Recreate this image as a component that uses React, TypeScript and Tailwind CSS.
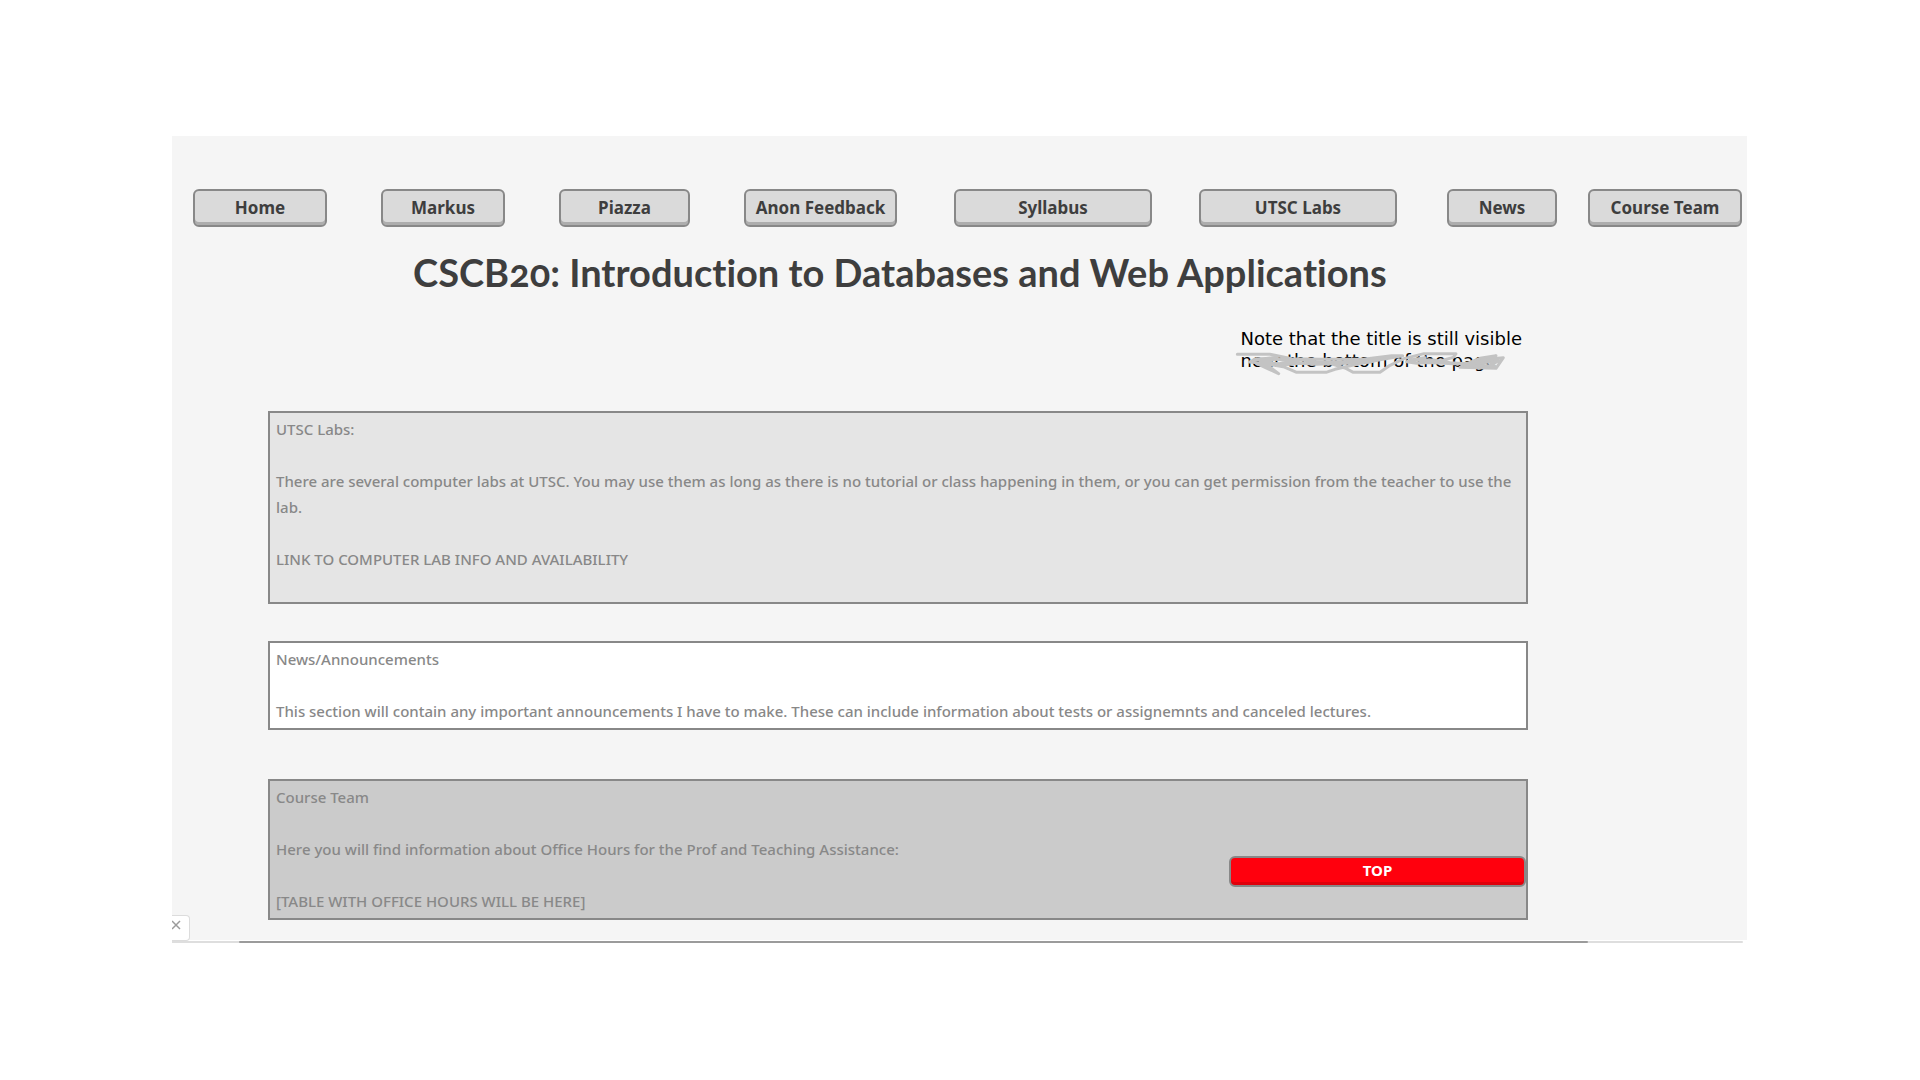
import React from "react";

const navItems = [
  { label: "Home", space: "mr-[54px]" },
  { label: "Markus", space: "mr-[54px]" },
  { label: "Piazza", space: "mr-[54px]" },
  { label: "Anon Feedback", space: "mr-[57px]" },
  { label: "Syllabus", space: "mr-[47px]" },
  { label: "UTSC Labs", space: "mr-[50px]" },
  { label: "News", space: "mr-[31px]" },
  { label: "Course Team", space: "mr-0" },
];

function NavBar() {
  return (
    <nav
      aria-label="Course"
      className="grid grid-cols-[188fr_178fr_185fr_210fr_245fr_248fr_141fr_154fr] pr-[5px] pl-[21px]"
    >
      {navItems.map(({ label, space }) => (
        <button
          key={label}
          type="button"
          className={`h-[38px] rounded-md border-2 border-[#888] bg-[#dadada] text-[17px] font-bold whitespace-nowrap text-[#3e3e3e] shadow-[inset_0_-3px_0_#adadad] ${space}`}
        >
          {label}
        </button>
      ))}
    </nav>
  );
}

function Scribble() {
  return (
    <svg
      aria-hidden="true"
      viewBox="0 0 1020 240"
      className="pointer-events-none absolute -top-[18px] -left-5 h-[80px] w-[340px]"
      fill="none"
      stroke="#c3c3c3"
      strokeWidth="9"
      strokeLinecap="round"
      strokeLinejoin="round"
    >
      <path d="M52 133 L150 133 L215 146 L300 148 L430 148 L515 137 L548 137 L480 149 L400 165 L345 178 L318 187 L230 187 L190 170 L130 160 L88 156 L110 146 L160 148 L215 151 L180 161 L125 158 L150 172 L176 191 L135 172 L110 160" />
      <path d="M195 158 L245 150 L295 156 L360 156 L420 152 L485 144 L450 156 L380 160 L290 163 L240 160 L180 166" />
      <path d="M330 160 L375 174 L400 187 L480 187 L510 166 L552 146 L612 131 L708 131 L700 142 L650 156 L590 160 L560 155 L615 143 L570 150 L640 150 L690 158 L740 161 L780 145 L828 137 L770 152 L720 172 L828 175 L850 143 L800 148 L760 164 L810 168 L835 152 L790 158 L700 161 L610 157" />
      <path d="M100 150 L170 142 L150 154 L120 152" />
      <path d="M735 170 L775 155 L820 145 L812 163 L825 170 L745 166" />
    </svg>
  );
}

function Card({ tone, children }: { tone: string; children: React.ReactNode }) {
  return (
    <section
      className={`relative border-2 border-[#888] px-1.5 pt-[3px] pb-1 text-[15px] leading-[26px] font-medium text-[#888] ${tone}`}
    >
      {children}
    </section>
  );
}

export default function App() {
  return (
    <div className="min-h-screen bg-white pt-[136px] pr-[173px] pl-[172px] font-['Noto_Sans',sans-serif]">
      <main className="relative bg-[#f5f5f5] pt-[53px] pb-5">
        <NavBar />

        <h1 className="mt-5 pl-[241px] font-['Lato',sans-serif] text-[38px] leading-[50px] font-bold text-[#3e3e3e] oldstyle-nums [font-variant-ligatures:none]">
          CSCB20: Introduction to Databases and Web Applications
        </h1>

        <div className="mt-[31px] flex justify-end pr-[225px]">
          <p className="relative font-['DejaVu_Sans',sans-serif] text-[18px] leading-[22px] text-black">
            Note that the title is still visible
            <br />
            near the bottom of the page
            <Scribble />
          </p>
        </div>

        <div className="mt-[39px] mr-[219px] ml-[96px]">
          <Card tone="bg-[#e5e5e5]">
            <h2>UTSC Labs:</h2>
            <p className="mt-[26px]">
              There are several computer labs at UTSC. You may use them as long as there is no tutorial or
              class happening in them, or you can get permission from the teacher to use the lab.
            </p>
            <p className="my-[26px]">LINK TO COMPUTER LAB INFO AND AVAILABILITY</p>
          </Card>

          <div className="mt-[37px]">
            <Card tone="bg-white">
              <h2>News/Announcements</h2>
              <p className="mt-[26px]">
                This section will contain any important announcements I have to make. These can include
                information about tests or assignemnts and canceled lectures.
              </p>
            </Card>
          </div>

          <div className="mt-[49px]">
            <Card tone="bg-[#cbcbcb]">
              <h2>Course Team</h2>
              <p className="mt-[26px]">
                Here you will find information about Office Hours for the Prof and Teaching Assistance:
              </p>
              <p className="mt-[26px]">[TABLE WITH OFFICE HOURS WILL BE HERE]</p>
              <button
                type="button"
                className="absolute right-0 bottom-[31px] flex h-[31px] w-[297px] items-center justify-center rounded-md border-2 border-[#888] bg-[#ff000d] pb-1 font-bold text-white shadow-[inset_0_-3px_0_#e0000b]"
              >
                TOP
              </button>
            </Card>
          </div>
        </div>

        <button
          type="button"
          aria-label="Close"
          className="absolute bottom-[-1px] left-0 h-[26px] w-[18px] rounded-r border border-l-0 border-[#dcdcdc] bg-white"
        >
          <svg viewBox="0 0 16 24" className="h-6 w-4" fill="none" stroke="#9b9b9b" strokeWidth="1.5">
            <path d="M0 5 L8 13 M8 5 L0 13" />
          </svg>
        </button>
      </main>

      <div className="mt-px mr-1 h-0.5 rounded-r-full bg-[#dedede] pr-[155px] pl-[67px]">
        <div className="h-full rounded-full bg-[#9b9b9b]" />
      </div>
    </div>
  );
}
